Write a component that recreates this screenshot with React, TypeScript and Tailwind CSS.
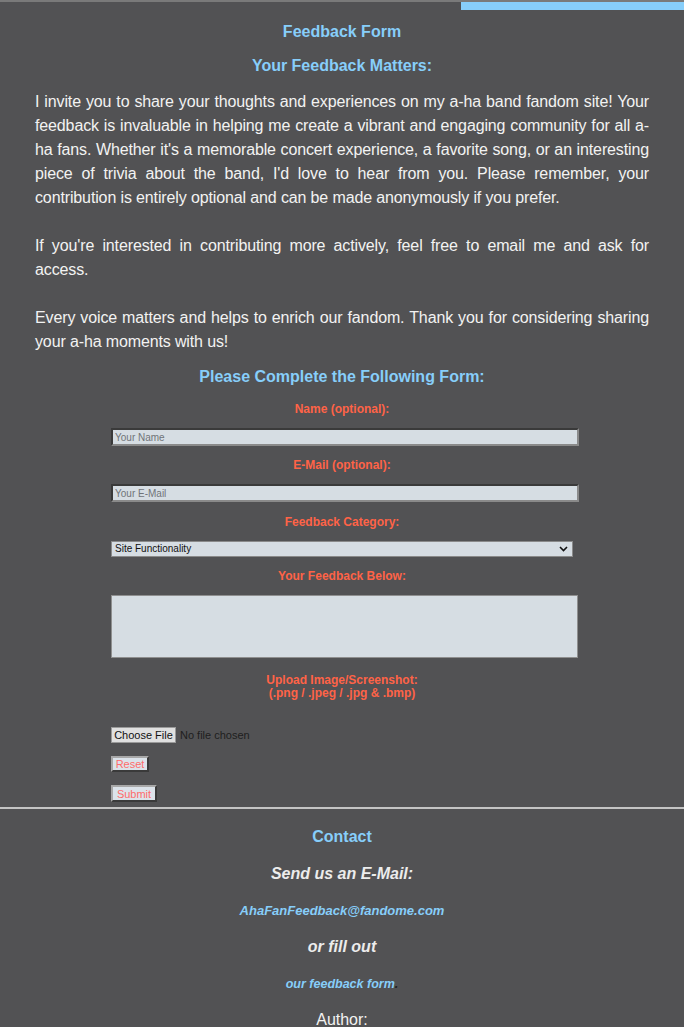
import React from "react";

export default function App() {
  const blue = "text-[#87cefa]";
  const red = "text-[#ff6347]";
  return (
    <div className="min-h-[1027px] w-full bg-[#525254] font-['Liberation_Sans',Arial,sans-serif] text-[#f2f2f2]">
      <div className="h-[2px] w-full bg-[#7a7a7a]" />
      <div className="flex justify-end">
        <div className="h-[8px] w-[223px] bg-[#87cefa]" />
      </div>
      <h1 className={`mt-[12px] text-center text-[16px] font-bold leading-[20px] ${blue}`}>Feedback Form</h1>
      <h2 className={`mt-[14px] text-center text-[16px] font-bold leading-[20px] ${blue}`}>Your Feedback Matters:</h2>
      <p className="mx-[35px] mt-[14px] text-justify text-[16px] leading-[24px] tracking-[-0.13px]">
        I invite you to share your thoughts and experiences on my a-ha band fandom site! Your feedback is invaluable in helping me create a vibrant and engaging community for all a-ha fans. Whether it's a memorable concert experience, a favorite song, or an interesting piece of trivia about the band, I'd love to hear from you. Please remember, your contribution is entirely optional and can be made anonymously if you prefer.
        <br />
        <br />
        If you're interested in contributing more actively, feel free to email me and ask for access.
        <br />
        <br />
        Every voice matters and helps to enrich our fandom. Thank you for considering sharing your a-ha moments with us!
      </p>
      <h2 className={`mt-[13px] text-center text-[16px] font-bold leading-[20px] ${blue}`}>Please Complete the Following Form:</h2>

      <form className="mt-[14px]" onSubmit={(e) => e.preventDefault()}>
        <div className={`text-center text-[12px] font-bold leading-[16px] ${red}`}>Name (optional):</div>
        <input
          type="text"
          placeholder="Your Name"
          className="ml-[111px] mt-[11px] block h-[18px] w-[468px] border-2 border-t-[#3a3a3a] border-l-[#3a3a3a] border-b-[#8a8a8a] border-r-[#8a8a8a] bg-[#d6dde3] px-[2px] text-[10px] leading-[13px] text-[#222] placeholder:text-[#707478] outline-none"
        />
        <div className={`mt-[11px] text-center text-[12px] font-bold leading-[16px] ${red}`}>E-Mail (optional):</div>
        <input
          type="text"
          placeholder="Your E-Mail"
          className="ml-[111px] mt-[11px] block h-[18px] w-[468px] border-2 border-t-[#3a3a3a] border-l-[#3a3a3a] border-b-[#8a8a8a] border-r-[#8a8a8a] bg-[#d6dde3] px-[2px] text-[10px] leading-[13px] text-[#222] placeholder:text-[#707478] outline-none"
        />
        <div className={`mt-[12px] text-center text-[12px] font-bold leading-[16px] ${red}`}>Feedback Category:</div>
        <div className="ml-[111px] mt-[11px] flex h-[16px] w-[462px] items-center justify-between border border-[#8a8a8a] bg-[#d6dde3] pl-[3px] pr-[4px] text-[10px] leading-[12px] text-[#111]">
          <span>Site Functionality</span>
          <svg width="9" height="6" viewBox="0 0 9 6" fill="none">
            <path d="M1 1l3.5 3.5L8 1" stroke="#111" strokeWidth="1.6" />
          </svg>
        </div>
        <div className={`mt-[11px] text-center text-[12px] font-bold leading-[16px] ${red}`}>Your Feedback Below:</div>
        <textarea className="ml-[111px] mt-[11px] block h-[63px] w-[467px] resize-none border border-[#8f8f8f] bg-[#d6dde3] outline-none" />
        <div className={`mt-[16px] text-center text-[12px] font-bold leading-[13px] ${red}`}>
          Upload Image/Screenshot:
          <br />
          (.png / .jpeg / .jpg &amp; .bmp)
        </div>
        <div className="ml-[111px] mt-[27px] flex items-center gap-[4px] text-[11px] leading-[13px]">
          <span className="flex h-[16px] w-[65px] items-center justify-center border border-[#9a9a9a] bg-[#e0e0e0] text-[#111]">Choose File</span>
          <span className="text-[#1e1e1e]">No file chosen</span>
        </div>
        <button
          type="reset"
          className="ml-[111px] mt-[13px] block h-[16px] w-[38px] border-2 border-t-[#a8a8a8] border-l-[#a8a8a8] border-b-[#3a3a3a] border-r-[#3a3a3a] bg-[#dce3ea] text-[11px] leading-[12px] text-[#ff6b6b]"
        >
          Reset
        </button>
        <button
          type="submit"
          className="ml-[111px] mt-[13px] block h-[17px] w-[46px] border-2 border-t-[#a8a8a8] border-l-[#a8a8a8] border-b-[#3a3a3a] border-r-[#3a3a3a] bg-[#dce3ea] text-[11px] leading-[12px] text-[#ff6b6b]"
        >
          Submit
        </button>
      </form>

      <footer className="mt-[5px] border-t-2 border-[#c4c4c4]">
        <h2 className={`mt-[18px] text-center text-[16px] font-bold leading-[20px] ${blue}`}>Contact</h2>
        <div className="mt-[17px] text-center text-[16px] font-bold italic leading-[20px] text-[#ececec]">Send us an E-Mail:</div>
        <div className="mt-[19px] text-center text-[13px] font-bold italic leading-[16px]">
          <a className={blue}>AhaFanFeedback@fandome.com</a>
        </div>
        <div className="mt-[18px] text-center text-[16px] font-bold italic leading-[20px] text-[#ececec]">or fill out</div>
        <div className="mt-[19px] text-center text-[12.5px] font-bold italic leading-[16px]">
          <a className={blue}>our feedback form</a>
          <span className="text-[#222]">.</span>
        </div>
        <div className="mt-[18px] text-center text-[16px] leading-[20px] text-[#f2f2f2]">Author:</div>
      </footer>
    </div>
  );
}
